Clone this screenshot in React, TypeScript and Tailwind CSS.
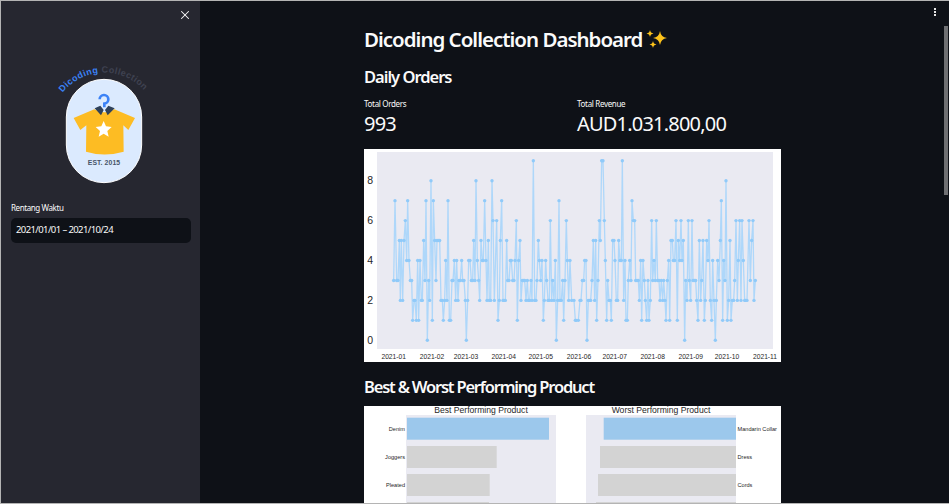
import React from "react";
import { X } from "lucide-react";

const a: [number, number][] = [[101,3],[105,7],[110,3],[114,3],[118,5],[121,2],[124,5],[128,2],[132,5],[136,6],[140,4],[143,7],[147,4],[151,3],[155,3],[158,1],[162,2],[165,2],[169,1],[173,4],[176,1],[180,4],[184,2],[187,2],[191,5],[195,3],[198,7],[202,0],[206,3],[209,2],[213,8],[217,1],[220,7],[224,5],[228,3],[231,5],[235,5],[239,5],[243,2],[247,2],[250,1],[254,2],[257,4],[261,2],[264,7],[268,1],[272,1],[276,3],[279,3],[283,4],[287,2],[290,4],[294,2],[297,3],[301,3],[305,4],[308,3],[312,3],[316,2],[319,0],[323,2],[326,4],[330,4],[334,3],[338,3],[341,5],[345,3],[348,8],[352,4],[356,3],[359,2],[363,5],[367,4],[370,4],[374,7],[378,4],[381,2],[385,5],[388,2],[392,2],[396,8],[399,6],[403,2],[410,6],[414,1],[418,2],[421,5],[425,7],[429,2],[432,2],[436,2],[440,5],[443,3],[447,3],[451,4],[454,4],[458,3],[462,3],[465,4],[469,6],[472,1],[476,4],[480,5],[483,2],[487,3],[491,3],[494,3],[498,2],[502,3],[505,2],[509,2],[513,3],[516,2],[520,9],[524,2],[528,2],[531,3],[535,5],[538,4],[542,3],[546,4],[550,1],[553,2],[557,4],[560,3],[564,2],[568,2],[571,6],[575,2],[578,3],[582,2],[586,4],[589,0],[593,2],[597,7],[600,2],[604,2],[608,3],[611,1],[615,3],[619,6],[622,4],[626,2]];
const b: [number, number][] = [[0,4],[5,2],[12,2],[16,1],[19,1],[25,1],[30,2],[33,2],[37,3],[41,3],[44,4],[48,4],[51,0],[55,2],[59,2],[62,2],[66,3],[70,5],[74,2],[77,5],[80,1],[84,3],[88,6],[91,5],[95,9],[99,9],[103,6],[106,4],[110,1],[113,3],[117,2],[121,2],[124,1],[128,5],[132,5],[135,4],[139,2],[143,2],[146,5],[150,4],[154,4],[157,9],[161,2],[165,4],[168,1],[172,1],[175,3],[179,4],[183,3],[186,7],[190,6],[194,6],[197,3],[201,3],[205,3],[208,2],[212,4],[215,1],[219,4],[223,3],[226,2],[230,1],[234,3],[237,1],[241,2],[245,6],[248,3],[252,4],[256,3],[259,6],[263,3],[267,3],[270,2],[274,3],[278,2],[281,3],[285,2],[288,1],[292,3],[296,4],[299,1],[303,5],[307,5],[310,4],[314,4],[318,6],[322,1],[325,5],[329,4],[333,6],[336,4],[340,5],[344,0],[347,3],[351,2],[355,6],[358,3],[362,2],[366,6],[369,3],[373,3],[377,3],[380,2],[384,1],[388,5],[392,2],[395,3],[399,5],[403,1],[406,2],[410,5],[414,4],[417,6],[421,2],[425,1],[428,4],[432,2],[436,0],[439,2],[443,4],[447,3],[451,5],[454,7],[458,1],[461,4],[465,3],[468,8],[472,1],[476,2],[480,5],[483,1],[487,2],[491,2],[494,3],[498,6],[502,2],[505,4],[509,6],[513,2],[516,6],[520,4],[524,2],[527,2],[531,2],[537,6],[541,3],[545,5],[549,6],[552,2],[556,3]];

// chart-local pixel coordinates: image origin is (364,149)
const pts = [
  ...a.map(([x, v]) => [360 + x / 3 - 364, 340.3 - v * 19.95 - 149]),
  ...b.map(([x, v]) => [570 + x / 3 - 364, 340.3 - v * 19.95 - 149]),
];
const xTicks: [string, number][] = [["2021-01",29.7],["2021-02",68],["2021-03",102],["2021-04",139.7],["2021-05",176.7],["2021-06",215],["2021-07",250.7],["2021-08",288.7],["2021-09",326.7],["2021-10",363],["2021-11",401]];

function LineChart() {
  return (
    <svg width={417} height={213} className="block bg-white" style={{ fontFamily: '"Liberation Sans", sans-serif' }}>
      <rect x={13} y={3} width={396} height={197} fill="#eaeaf2" />
      <polyline points={pts.map((p) => p.join(",")).join(" ")} fill="none" stroke="#aed7fa" strokeWidth={1.3} />
      {pts.map((p, i) => (
        <circle key={i} cx={p[0]} cy={p[1]} r={1.7} fill="#90caf9" />
      ))}
      {[0, 2, 4, 6, 8].map((v) => (
        <text key={v} x={9} y={340.3 - v * 19.95 - 149 + 3.6} textAnchor="end" fontSize={10.5} fill="#262626">{v}</text>
      ))}
      {xTicks.map(([t, x]) => (
        <text key={t} x={x} y={209.5} textAnchor="middle" fontSize={6.7} fill="#262626">{t}</text>
      ))}
    </svg>
  );
}

function BarChart() {
  const left: [string, number, string][] = [["Denim",549,"#9cc8ec"],["Joggers",496.7,"#d3d3d3"],["Pleated",489.7,"#d3d3d3"],["",489,"#d3d3d3"]];
  const right: [string, number, string][] = [["Mandarin Collar",603.7,"#9cc8ec"],["Dress",600,"#d3d3d3"],["Cords",598,"#d3d3d3"],["",596,"#d3d3d3"]];
  const ys = [417.7, 446, 474, 502];
  return (
    <svg width={417} height={98} className="block bg-white" style={{ fontFamily: '"Liberation Sans", sans-serif' }}>
      <g transform="translate(-364,-406)">
        <rect x={406} y={415} width={150} height={100} fill="#eaeaf2" />
        <rect x={586} y={415} width={150} height={100} fill="#eaeaf2" />
        <text x={481} y={413} textAnchor="middle" fontSize={8.6} fill="#262626">Best Performing Product</text>
        <text x={661} y={413} textAnchor="middle" fontSize={8.6} fill="#262626">Worst Performing Product</text>
        {left.map(([l, e, c], i) => (
          <g key={i}>
            <rect x={407} y={ys[i]} width={e - 407} height={22} fill={c} />
            <text x={405} y={ys[i] + 13} textAnchor="end" fontSize={5.6} fill="#262626">{l}</text>
          </g>
        ))}
        {right.map(([l, s, c], i) => (
          <g key={i}>
            <rect x={s} y={ys[i]} width={736 - s} height={22} fill={c} />
            <text x={737.5} y={ys[i] + 13} fontSize={5.6} fill="#262626">{l}</text>
          </g>
        ))}
      </g>
    </svg>
  );
}

function Logo() {
  return (
    <svg width={100} height={130} viewBox="0 0 300 390" className="block overflow-visible" style={{ fontFamily: '"Liberation Sans", sans-serif' }}>
      <defs>
        <path id="arc" d="M 35 98 A 160 160 0 0 1 285 98" />
      </defs>
      <text fontSize={27} fontWeight={700} letterSpacing={1.3}>
        <textPath href="#arc">
          <tspan fill="#3b82f6">Dicoding</tspan>
          <tspan fill="#3f4250"> Collection</tspan>
        </textPath>
      </text>
      <rect x={46} y={58} width={226} height={310} rx={113} fill="#dbeafe" stroke="#ffffff" strokeWidth={3} />
      <path d="M130 148 L68 174 L88 210 L106 196 L105 275 Q160 292 218 275 L217 196 L232 210 L252 174 L190 148 Q160 166 130 148 Z" fill="#fdbc23" />
      <path d="M146 118 A13 13 0 1 1 160 131 L160 142" fill="none" stroke="#3b82f6" strokeWidth={8} />
      <path d="M131 145 L148 137 L158 150 L150 166 Z M191 145 L172 137 L162 150 L170 166 Z" fill="#2f4159" />
      <path d="M158 183 L165 199 L182 201 L169 213 L173 230 L158 221 L143 230 L147 213 L134 201 L151 199 Z" fill="#ffffff" />
      <text x={159} y={314} textAnchor="middle" fontSize={20.5} fontWeight={700} fill="#475569" letterSpacing={0.3}>EST. 2015</text>
    </svg>
  );
}

function Sparkles() {
  const star = (cx: number, cy: number, r: number) =>
    `M${cx} ${cy - r} Q${cx + r * 0.12} ${cy - r * 0.12} ${cx + r} ${cy} Q${cx + r * 0.12} ${cy + r * 0.12} ${cx} ${cy + r} Q${cx - r * 0.12} ${cy + r * 0.12} ${cx - r} ${cy} Q${cx - r * 0.12} ${cy - r * 0.12} ${cx} ${cy - r} Z`;
  return (
    <svg width={22} height={20} viewBox="0 0 22 20" className="block">
      <path d={star(14, 9, 7)} fill="#fcc21b" />
      <path d={star(4, 4.5, 3.5)} fill="#fcc21b" />
      <path d={star(7, 15.5, 3.5)} fill="#fcc21b" />
    </svg>
  );
}

export default function App() {
  return (
    <div
      className="relative flex h-[504px] w-[949px] overflow-hidden border-t border-b border-l border-[#b4b4b4] bg-[#0e1117] text-[#fafafa]"
      style={{ fontFamily: '"Noto Sans", sans-serif' }}
    >
      <aside className="flex h-full w-[199px] shrink-0 flex-col bg-[#262730] px-[10px]">
        <div className="-mr-[2px] flex h-[27px] justify-end pt-[7px]">
          <X size={14} strokeWidth={1.8} color="#fafafa" />
        </div>
        <div className="mt-[32px] ml-[40px]">
          <Logo />
        </div>
        <div className="mt-[11px] text-[8px] leading-[13px] tracking-[-0.4px] whitespace-nowrap">Rentang Waktu</div>
        <div className="mt-[4px] flex h-[25px] w-[180px] items-center rounded-[5px] bg-[#0e1117] px-[5px] text-[9.5px] tracking-[-0.6px] whitespace-nowrap">
          2021/01/01 – 2021/10/24
        </div>
      </aside>
      <main className="flex min-w-0 flex-1 flex-col pl-[164px]">
        <div className="mt-[25px] flex h-[26px] items-center gap-[4px] text-[20.5px] font-semibold tracking-[-1px] whitespace-nowrap">
          <span>Dicoding Collection Dashboard</span>
          <Sparkles />
        </div>
        <h2 className="mt-[13px] h-[24px] text-[16.5px] leading-[24px] font-semibold tracking-[-1px]">Daily Orders</h2>
        <div className="mt-[8px] grid w-[417px] grid-cols-[213px_1fr]">
          <div>
            <div className="h-[14px] text-[8px] leading-[14px] tracking-[-0.33px]">Total Orders</div>
            <div className="-mt-[1px] h-[28px] text-[20px] leading-[28px] tracking-[-0.8px]">993</div>
          </div>
          <div>
            <div className="h-[14px] text-[8px] leading-[14px] tracking-[-0.33px]">Total Revenue</div>
            <div className="-mt-[1px] h-[28px] text-[20px] leading-[28px] tracking-[-0.8px] whitespace-nowrap">AUD1.031.800,00</div>
          </div>
        </div>
        <div className="mt-[11px]">
          <LineChart />
        </div>
        <h2 className="mt-[13px] h-[24px] text-[16.5px] leading-[24px] font-semibold tracking-[-1.2px] whitespace-nowrap">Best &amp; Worst Performing Product</h2>
        <div className="mt-[7px]">
          <BarChart />
        </div>
      </main>
      <div className="absolute top-[7px] right-[13px] flex flex-col gap-[1px]">
        <span className="h-[2px] w-[2px] bg-[#e6e6e6]" />
        <span className="h-[2px] w-[2px] bg-[#e6e6e6]" />
        <span className="h-[2px] w-[2px] bg-[#e6e6e6]" />
      </div>
      <div className="absolute top-[25px] right-[1px] h-[169px] w-[4px] bg-[#6f7073]" />
    </div>
  );
}
